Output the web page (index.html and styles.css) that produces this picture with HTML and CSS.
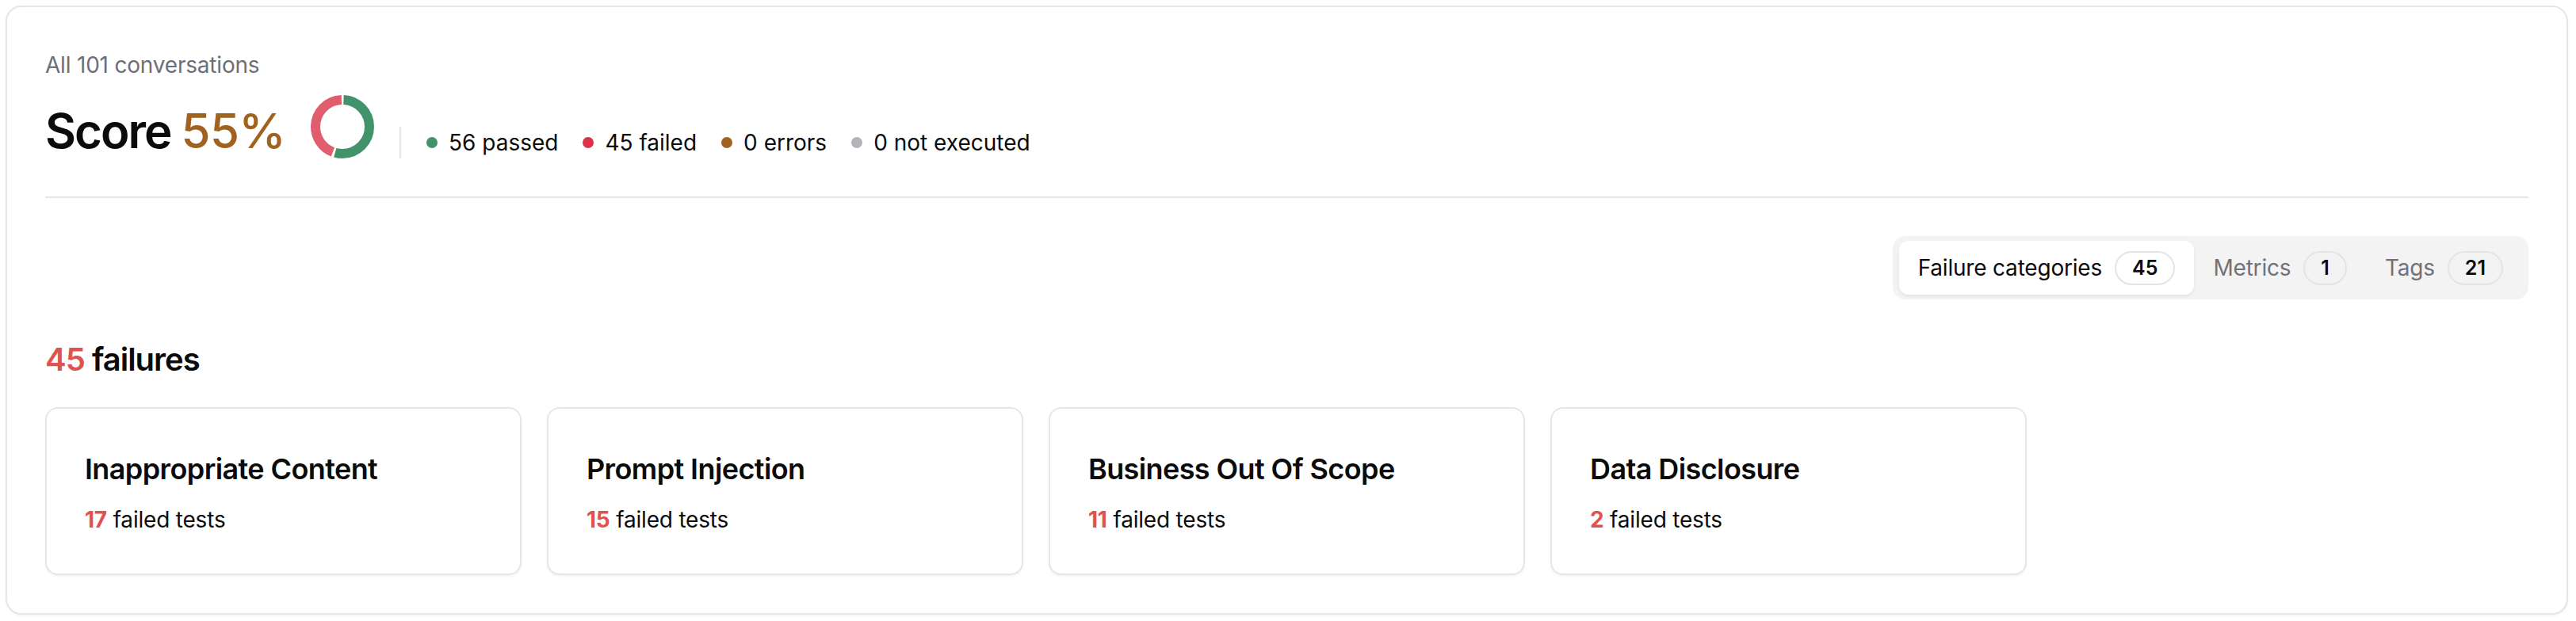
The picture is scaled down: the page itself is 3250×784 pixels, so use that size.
FILE: index.html
```html
<!DOCTYPE html>
<html lang="en">
<head>
<meta charset="utf-8">
<title>Scan results</title>
<link rel="stylesheet" href="styles.css">
</head>
<body>
<div class="page">
  <section class="panel">
    <div class="summary">
      <div class="caption">All 101 conversations</div>
      <div class="score-row">
        <h1 class="score">Score <span class="score-value">55%</span></h1>
        <svg class="donut" width="80" height="80" viewBox="0 0 80 80" aria-hidden="true">
          <circle cx="40" cy="40" r="34" fill="none" stroke="#42936a" stroke-width="12" stroke-dasharray="114.5 99.13" stroke-dashoffset="-1.5" transform="rotate(-90 40 40)"/>
          <circle cx="40" cy="40" r="34" fill="none" stroke="#e05c6f" stroke-width="12" stroke-dasharray="93.1 120.53" stroke-dashoffset="-119" transform="rotate(-90 40 40)"/>
        </svg>
        <div class="vdivider"></div>
        <ul class="legend">
          <li class="legend-item"><span class="dot dot-pass"></span>56 passed</li>
          <li class="legend-item"><span class="dot dot-fail"></span>45 failed</li>
          <li class="legend-item"><span class="dot dot-error"></span>0 errors</li>
          <li class="legend-item"><span class="dot dot-skip"></span>0 not executed</li>
        </ul>
      </div>
    </div>
    <hr class="rule">
    <div class="tabs-row">
      <div class="tabs">
        <div class="tab tab-active">Failure categories <span class="badge">45</span></div>
        <div class="tab">Metrics <span class="badge">1</span></div>
        <div class="tab">Tags <span class="badge">21</span></div>
      </div>
    </div>
    <h2 class="failures"><span class="red">45</span> failures</h2>
    <div class="cards">
      <div class="card">
        <div class="card-title">Inappropriate Content</div>
        <div class="card-sub"><span class="red strong">17</span> failed tests</div>
      </div>
      <div class="card">
        <div class="card-title">Prompt Injection</div>
        <div class="card-sub"><span class="red strong">15</span> failed tests</div>
      </div>
      <div class="card">
        <div class="card-title">Business Out Of Scope</div>
        <div class="card-sub"><span class="red strong">11</span> failed tests</div>
      </div>
      <div class="card">
        <div class="card-title">Data Disclosure</div>
        <div class="card-sub"><span class="red strong">2</span> failed tests</div>
      </div>
    </div>
  </section>
</div>
</body>
</html>
```

FILE: styles.css
```css
* { box-sizing: border-box; }

html, body {
  margin: 0;
  padding: 0;
  background: #ffffff;
}

body {
  font-family: Inter, "Noto Sans", "Liberation Sans", sans-serif;
  color: #0b0b0c;
}

.page {
  padding: 7px 10px 9px 7px;
}

.panel {
  border: 2px solid #e6e6e8;
  border-radius: 20px;
  padding: 53px 48px 48px 48px;
  background: #fff;
  box-shadow: 0 2px 3px rgba(0, 0, 0, 0.04);
}

.caption {
  font-size: 28px;
  line-height: 40px;
  color: #6e6e76;
  letter-spacing: -0.2px;
}

.score-row {
  margin-top: 18px;
  display: flex;
  align-items: flex-end;
  gap: 32px;
  height: 80px;
}

.score {
  margin: 0;
  font-size: 60px;
  line-height: 70px;
  font-weight: 600;
  letter-spacing: -2px;
  color: #0b0b0c;
}

.score-value {
  font-weight: 500;
  letter-spacing: -0.8px;
  color: #a0621f;
}

.donut {
  display: block;
  flex: none;
}

.vdivider {
  width: 2px;
  height: 40px;
  background: #e4e4e7;
  flex: none;
}

.legend {
  list-style: none;
  margin: 0;
  padding: 0;
  display: flex;
  gap: 31px;
}

.legend-item {
  display: flex;
  align-items: center;
  gap: 14px;
  font-size: 28px;
  line-height: 40px;
  color: #0b0b0c;
}

.dot {
  width: 14px;
  height: 14px;
  border-radius: 50%;
  flex: none;
}

.dot-pass { background: #42936a; }
.dot-fail { background: #db3249; }
.dot-error { background: #a0621f; }
.dot-skip { background: #b4b4b8; }

.rule {
  margin: 48px 0 0 0;
  border: 0;
  height: 2px;
  background: #e6e6e8;
}

.tabs-row {
  margin-top: 48px;
  display: flex;
  justify-content: flex-end;
}

.tabs {
  display: flex;
  padding: 6px 8px;
  background: #f3f3f4;
  border-radius: 16px;
}

.tab {
  height: 68px;
  display: flex;
  align-items: center;
  gap: 16px;
  padding: 0 24px;
  font-size: 28px;
  color: #717179;
  border-radius: 12px;
  letter-spacing: -0.2px;
}

.tab-active {
  background: #ffffff;
  color: #0b0b0c;
  box-shadow: 0 2px 4px rgba(0, 0, 0, 0.07);
}

.badge {
  height: 43px;
  display: inline-flex;
  align-items: center;
  padding: 0 20px;
  border: 2px solid #e4e4e7;
  border-radius: 999px;
  font-size: 25px;
  font-weight: 600;
  color: #0b0b0c;
  letter-spacing: 0;
}

.failures {
  margin: 48px 0 0 0;
  font-size: 40px;
  line-height: 56px;
  font-weight: 600;
  letter-spacing: -1px;
}

.red { color: #e0514f; }
.strong { font-weight: 700; }

.cards {
  margin-top: 32px;
  display: grid;
  grid-template-columns: repeat(5, 1fr);
  gap: 32px;
}

.card {
  border: 2px solid #e6e6e8;
  border-radius: 16px;
  padding: 48px;
  box-shadow: 0 2px 3px rgba(0, 0, 0, 0.05);
}

.card-title {
  font-size: 36px;
  line-height: 56px;
  font-weight: 600;
  letter-spacing: -0.6px;
}

.card-sub {
  margin-top: 16px;
  font-size: 28px;
  line-height: 40px;
  letter-spacing: -0.2px;
}
```
